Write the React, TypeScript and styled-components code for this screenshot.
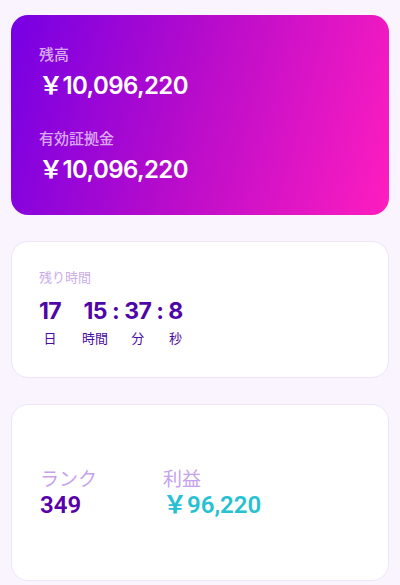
import { createGlobalStyle, styled } from "styled-components";

const GlobalStyle = createGlobalStyle`
  html, body {
    margin: 0;
    padding: 0;
    background-color: #faf4ff;
  }
  body {
    font-family: "Inter", "Noto Sans CJK JP", sans-serif;
  }
`;

const Page = styled.div`
  display: flex;
  flex-direction: column;
  gap: 26px;
  padding: 15px 11px 6px 11px;
`;

const BalanceCard = styled.div`
  box-sizing: border-box;
  height: 200px;
  border-radius: 17px;
  padding: 28px 28px;
  background: linear-gradient(105deg, #7600e4 0%, #b40bcc 45%, #ff1dbf 100%);
  display: flex;
  flex-direction: column;
`;

const BalanceLabel = styled.div<{ $top?: number }>`
  font-family: "Noto Sans CJK JP", sans-serif;
  font-size: 15px;
  line-height: 22px;
  font-weight: 500;
  color: rgba(255, 255, 255, 0.68);
  margin-top: ${(p) => p.$top ?? 0}px;
`;

const BalanceValue = styled.div`
  font-family: "Inter", "Noto Sans CJK JP", sans-serif;
  font-size: 24px;
  line-height: 32px;
  font-weight: 600;
  color: #ffffff;
  margin-top: 5px;
  letter-spacing: -0.6px;
`;

const WhiteCard = styled.div<{ $height: number; $center?: boolean }>`
  box-sizing: border-box;
  height: ${(p) => p.$height}px;
  background: #ffffff;
  border: 1px solid #efe4fb;
  border-radius: 17px;
  padding: ${(p) => (p.$center ? "0 28px" : "26px 27px")};
  display: flex;
  flex-direction: column;
  justify-content: ${(p) => (p.$center ? "center" : "flex-start")};
`;

const TimerLabel = styled.div`
  font-family: "Noto Sans CJK JP", sans-serif;
  font-size: 13px;
  line-height: 18px;
  color: #c9aee9;
`;

const TimerRow = styled.div`
  display: flex;
  align-items: flex-start;
  margin-top: 11px;
`;

const TimerCol = styled.div<{ $gap?: number }>`
  display: flex;
  flex-direction: column;
  align-items: center;
  margin-right: ${(p) => p.$gap ?? 0}px;
`;

const TimerNum = styled.div`
  font-family: "Inter", sans-serif;
  font-size: 23px;
  line-height: 28px;
  font-weight: 700;
  color: #4e06a8;
  letter-spacing: -0.6px;
`;

const TimerUnit = styled.div`
  font-family: "Noto Sans CJK JP", sans-serif;
  font-size: 13px;
  line-height: 18px;
  color: #4a0aa0;
  margin-top: 4px;
`;

const StatsGrid = styled.div`
  display: grid;
  grid-template-columns: 123px auto;
  margin-top: -2px;
`;

const StatLabel = styled.div`
  font-family: "Noto Sans CJK JP", sans-serif;
  font-size: 19px;
  line-height: 26px;
  color: #c5a3ec;
`;

const StatValue = styled.div<{ $color: string }>`
  font-family: "Roboto", "Noto Sans CJK JP", sans-serif;
  font-size: 24px;
  line-height: 28px;
  font-weight: 600;
  color: ${(p) => p.$color};
`;

const timer = [
  { num: "17", unit: "日", gap: 21 },
  { num: "15", unit: "時間", gap: 4 },
  { num: ":", unit: "", gap: 5 },
  { num: "37", unit: "分", gap: 5 },
  { num: ":", unit: "", gap: 5 },
  { num: "8", unit: "秒", gap: 0 },
];

export default function App() {
  return (
    <>
      <GlobalStyle />
      <Page>
        <BalanceCard>
          <BalanceLabel>残高</BalanceLabel>
          <BalanceValue>￥10,096,220</BalanceValue>
          <BalanceLabel $top={25}>有効証拠金</BalanceLabel>
          <BalanceValue>￥10,096,220</BalanceValue>
        </BalanceCard>

        <WhiteCard $height={137}>
          <TimerLabel>残り時間</TimerLabel>
          <TimerRow>
            {timer.map((t, i) => (
              <TimerCol key={i} $gap={t.gap}>
                <TimerNum>{t.num}</TimerNum>
                <TimerUnit>{t.unit || "\u00a0"}</TimerUnit>
              </TimerCol>
            ))}
          </TimerRow>
        </WhiteCard>

        <WhiteCard $height={177} $center>
          <StatsGrid>
            <StatLabel>ランク</StatLabel>
            <StatLabel>利益</StatLabel>
            <StatValue $color="#5800a9">349</StatValue>
            <StatValue $color="#27c1d1">￥96,220</StatValue>
          </StatsGrid>
        </WhiteCard>
      </Page>
    </>
  );
}
